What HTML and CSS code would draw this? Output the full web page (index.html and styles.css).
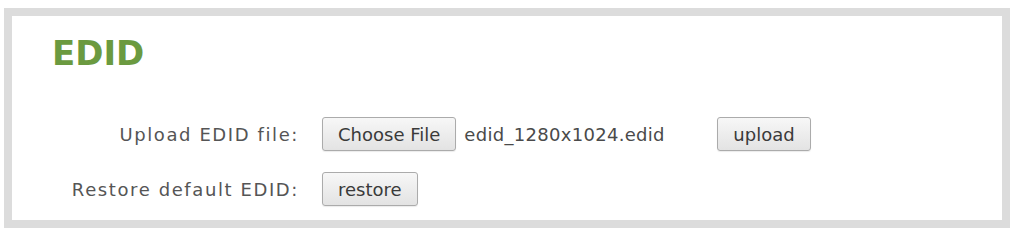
FILE: index.html
```html
<!DOCTYPE html>
<html lang="en">
<head>
    <meta charset="UTF-8">
    <title>EDID</title>
    <link rel="stylesheet" href="styles.css">
</head>
<body>

    <div class="panel">
        <h1>EDID</h1>

        <form class="edid-form">
            <label class="form-label">Upload EDID file:</label>
            <div class="form-field">
                <button type="button" class="btn">Choose File</button>
                <span class="file-name">edid_1280x1024.edid</span>
                <button type="button" class="btn">upload</button>
            </div>

            <label class="form-label">Restore default EDID:</label>
            <div class="form-field">
                <button type="button" class="btn">restore</button>
            </div>
        </form>
    </div>

</body>
</html>
```

FILE: styles.css
```css
body {
    margin: 0;
    padding: 8px 0 0 4px;
    background-color: #fff;
    font-family: 'DejaVu Sans', Verdana, sans-serif;
}

.panel {
    border: 8px solid #dcdcdc;
    padding: 0 0 14px 40px;
    background-color: #fff;
}

h1 {
    margin: 17px 0 44px 0;
    font-size: 34px;
    line-height: 40px;
    font-weight: bold;
    color: #6b9a40;
}

.edid-form {
    display: grid;
    grid-template-columns: 287px 1fr;
    column-gap: 23px;
    row-gap: 21px;
    margin-left: -40px;
}

.form-label {
    display: flex;
    align-items: center;
    justify-content: flex-end;
    height: 34px;
    font-size: 18px;
    letter-spacing: 1.6px;
    color: #555;
}

.form-field {
    display: flex;
    align-items: center;
    height: 34px;
}

.btn {
    height: 34px;
    padding: 0 15px;
    border: 1px solid #ababab;
    border-radius: 3px;
    background: linear-gradient(#f7f7f7, #e3e3e3);
    font-family: 'DejaVu Sans', Verdana, sans-serif;
    font-size: 18px;
    color: #3a3a3a;
    box-shadow: 0 1px 1px rgba(0, 0, 0, 0.08);
}

.file-name {
    width: 253px;
    padding-left: 8px;
    font-size: 18px;
    letter-spacing: 0.3px;
    color: #4a4a4a;
}
```
